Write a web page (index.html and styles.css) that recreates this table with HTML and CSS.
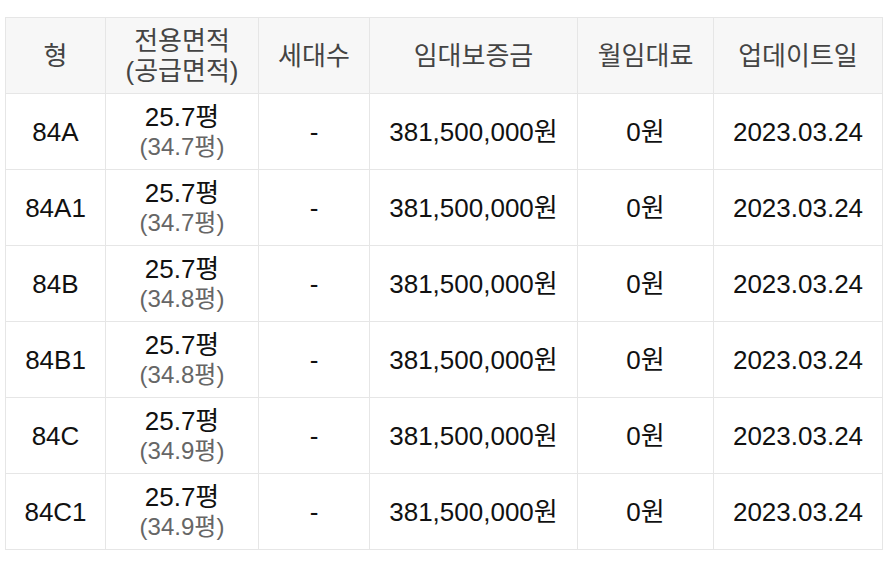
FILE: index.html
```html
<!DOCTYPE html>
<html lang="ko">
<head>
<meta charset="utf-8">
<link rel="stylesheet" href="styles.css">
</head>
<body>
<div class="wrap">
<table class="units">
<colgroup>
<col class="c1"><col class="c2"><col class="c3"><col class="c4"><col class="c5"><col class="c6">
</colgroup>
<thead>
<tr><th>형</th><th>전용면적<br>(공급면적)</th><th>세대수</th><th>임대보증금</th><th>월임대료</th><th>업데이트일</th></tr>
</thead>
<tbody>
<tr><td>84A</td><td><div class="main">25.7평</div><div class="sub">(34.7평)</div></td><td>-</td><td>381,500,000원</td><td>0원</td><td>2023.03.24</td></tr>
<tr><td>84A1</td><td><div class="main">25.7평</div><div class="sub">(34.7평)</div></td><td>-</td><td>381,500,000원</td><td>0원</td><td>2023.03.24</td></tr>
<tr><td>84B</td><td><div class="main">25.7평</div><div class="sub">(34.8평)</div></td><td>-</td><td>381,500,000원</td><td>0원</td><td>2023.03.24</td></tr>
<tr><td>84B1</td><td><div class="main">25.7평</div><div class="sub">(34.8평)</div></td><td>-</td><td>381,500,000원</td><td>0원</td><td>2023.03.24</td></tr>
<tr><td>84C</td><td><div class="main">25.7평</div><div class="sub">(34.9평)</div></td><td>-</td><td>381,500,000원</td><td>0원</td><td>2023.03.24</td></tr>
<tr><td>84C1</td><td><div class="main">25.7평</div><div class="sub">(34.9평)</div></td><td>-</td><td>381,500,000원</td><td>0원</td><td>2023.03.24</td></tr>
</tbody>
</table>
</div>
</body>
</html>
```
FILE: styles.css
```css
html, body {
  margin: 0;
  padding: 0;
  background: #fff;
}
body {
  font-family: "Liberation Sans", "Noto Sans CJK KR", sans-serif;
  color: #111;
}
.wrap {
  padding: 17px 11px 0 5px;
}
.units {
  width: 877px;
  table-layout: fixed;
  border-collapse: collapse;
  border-top: 1px solid #dcdcdc;
}
.c1 { width: 100px; }
.c2 { width: 153px; }
.c3 { width: 111px; }
.c4 { width: 208px; }
.c5 { width: 136px; }
.c6 { width: 169px; }
.units th, .units td {
  border: 1px solid #e6e6e6;
  text-align: center;
  vertical-align: middle;
  padding: 0;
  height: 75px;
}
.units th {
  background: #f7f7f7;
  color: #444;
  font-weight: normal;
  font-size: 26px;
  line-height: 30px;
}
.units td {
  font-size: 26px;
  line-height: 30px;
}
.units td .sub {
  color: #666;
  font-size: 24px;
  line-height: 29px;
}
```
